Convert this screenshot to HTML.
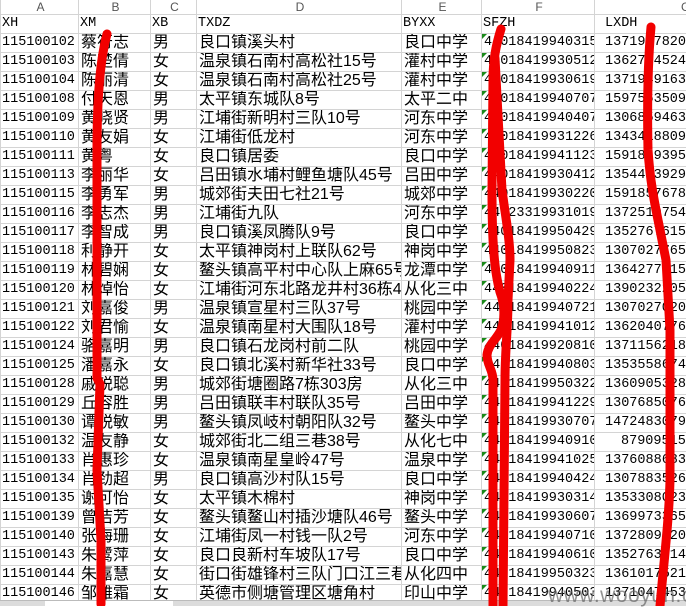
<!DOCTYPE html>
<html><head><meta charset="utf-8"><style>
*{margin:0;padding:0;box-sizing:border-box}
body{width:686px;height:606px;overflow:hidden;background:#fff;position:relative;font-family:"Liberation Mono","Noto Sans CJK SC",monospace;color:#000}
table{position:absolute;left:0;top:0px;border-collapse:collapse;table-layout:fixed;width:760px}
td{height:19px;border:1px solid #d4d4d4;white-space:nowrap;overflow:hidden;font-size:16px;line-height:18px;padding:0 0 0 2px;font-family:"Liberation Sans","Noto Sans CJK SC",sans-serif}
td.n{font-family:"Liberation Mono",monospace;font-size:13.5px;padding-left:1px}
td.f{position:relative;padding-left:2px}
td.f::before{content:"";position:absolute;left:0;top:0;border-top:5px solid #1a8a1a;border-right:5px solid transparent}
tr.h td{color:#555;text-align:center;font-family:"Liberation Sans",sans-serif;font-size:12px;height:14px;line-height:10px;background:#fff;border-top:none}
td.g{padding-left:10px}
.tab{position:absolute;left:0;top:600px;width:686px;height:6px;background:#dcdcdc;border-top:1px solid #bbb}
.tab i{position:absolute;left:45px;top:0;width:128px;height:6px;background:#fff}
.wm{position:absolute;left:548px;top:584px;font-family:"Liberation Sans",sans-serif;font-size:21px;color:#666;opacity:.7;letter-spacing:0.5px}
svg{position:absolute;left:0;top:0}
</style></head><body>
<table>
<colgroup><col style="width:78px"><col style="width:72px"><col style="width:46px"><col style="width:205px"><col style="width:80px"><col style="width:113px"><col style="width:166px"></colgroup>
<tr class="h"><td>A</td><td>B</td><td>C</td><td>D</td><td>E</td><td>F</td><td style="text-align:left;padding-left:86px">G</td></tr>
<tr><td class="n">XH</td><td class="n">XM</td><td class="n">XB</td><td class="n">TXDZ</td><td class="n">BYXX</td><td class="n">SFZH</td><td class="n g">LXDH</td></tr>
<tr><td class="n">115100102</td><td>蔡符志</td><td>男</td><td>良口镇溪头村</td><td>良口中学</td><td class="n f">44018419940315</td><td class="n g">1371917820</td></tr>
<tr><td class="n">115100103</td><td>陈楚倩</td><td>女</td><td>温泉镇石南村高松社15号</td><td>灌村中学</td><td class="n f">44018419930512</td><td class="n g">1362774524</td></tr>
<tr><td class="n">115100104</td><td>陈丽清</td><td>女</td><td>温泉镇石南村高松社25号</td><td>灌村中学</td><td class="n f">44018419930619</td><td class="n g">1371949163</td></tr>
<tr><td class="n">115100108</td><td>付天恩</td><td>男</td><td>太平镇东城队8号</td><td>太平二中</td><td class="n f">44018419940707</td><td class="n g">1597563509</td></tr>
<tr><td class="n">115100109</td><td>黄晓贤</td><td>男</td><td>江埔街新明村三队10号</td><td>河东中学</td><td class="n f">44018419940407</td><td class="n g">1306859463</td></tr>
<tr><td class="n">115100110</td><td>黄友娟</td><td>女</td><td>江埔街低龙村</td><td>河东中学</td><td class="n f">44018419931226</td><td class="n g">1343418809</td></tr>
<tr><td class="n">115100111</td><td>黄粤</td><td>女</td><td>良口镇居委</td><td>良口中学</td><td class="n f">44018419941123</td><td class="n g">1591849395</td></tr>
<tr><td class="n">115100113</td><td>李丽华</td><td>女</td><td>吕田镇水埔村鲤鱼塘队45号</td><td>吕田中学</td><td class="n f">44018419930412</td><td class="n g">1354453929</td></tr>
<tr><td class="n">115100115</td><td>李勇军</td><td>男</td><td>城郊街夫田七社21号</td><td>城郊中学</td><td class="n f">44018419930220</td><td class="n g">1591857678</td></tr>
<tr><td class="n">115100116</td><td>李志杰</td><td>男</td><td>江埔街九队</td><td>河东中学</td><td class="n f">44023319931019</td><td class="n g">1372510754</td></tr>
<tr><td class="n">115100117</td><td>李智成</td><td>男</td><td>良口镇溪凤腾队9号</td><td>良口中学</td><td class="n f">44018419950429</td><td class="n g">1352767615</td></tr>
<tr><td class="n">115100118</td><td>利静开</td><td>女</td><td>太平镇神岗村上联队62号</td><td>神岗中学</td><td class="n f">44018419950823</td><td class="n g">1307027765</td></tr>
<tr><td class="n">115100119</td><td>林碧娴</td><td>女</td><td>鳌头镇高平村中心队上麻65号</td><td>龙潭中学</td><td class="n f">44018419940911</td><td class="n g">1364277515</td></tr>
<tr><td class="n">115100120</td><td>林焯怡</td><td>女</td><td>江埔街河东北路龙井村36栋4</td><td>从化三中</td><td class="n f">44018419940224</td><td class="n g">1390232205</td></tr>
<tr><td class="n">115100121</td><td>刘嘉俊</td><td>男</td><td>温泉镇宣星村三队37号</td><td>桃园中学</td><td class="n f">44018419940721</td><td class="n g">1307027020</td></tr>
<tr><td class="n">115100122</td><td>刘君愉</td><td>女</td><td>温泉镇南星村大围队18号</td><td>灌村中学</td><td class="n f">44018419941012</td><td class="n g">1362040776</td></tr>
<tr><td class="n">115100124</td><td>骆嘉明</td><td>男</td><td>良口镇石龙岗村前二队</td><td>桃园中学</td><td class="n f">44018419920810</td><td class="n g">1371156218</td></tr>
<tr><td class="n">115100125</td><td>潘嘉永</td><td>女</td><td>良口镇北溪村新华社33号</td><td>良口中学</td><td class="n f">44018419940803</td><td class="n g">1353558674</td></tr>
<tr><td class="n">115100128</td><td>戚锐聪</td><td>男</td><td>城郊街塘圈路7栋303房</td><td>从化三中</td><td class="n f">44018419950322</td><td class="n g">1360905328</td></tr>
<tr><td class="n">115100129</td><td>丘容胜</td><td>男</td><td>吕田镇联丰村联队35号</td><td>吕田中学</td><td class="n f">44018419941229</td><td class="n g">1307685076</td></tr>
<tr><td class="n">115100130</td><td>谭锐敏</td><td>男</td><td>鳌头镇凤岐村朝阳队32号</td><td>鳌头中学</td><td class="n f">44018419930707</td><td class="n g">1472483079</td></tr>
<tr><td class="n">115100132</td><td>温友静</td><td>女</td><td>城郊街北二组三巷38号</td><td>从化七中</td><td class="n f">44018419940910</td><td class="n g" style="padding-left:26px">87909515</td></tr>
<tr><td class="n">115100133</td><td>肖惠珍</td><td>女</td><td>温泉镇南星皇岭47号</td><td>温泉中学</td><td class="n f">44018419941025</td><td class="n g">1376088683</td></tr>
<tr><td class="n">115100134</td><td>肖劲超</td><td>男</td><td>良口镇高沙村队15号</td><td>良口中学</td><td class="n f">44018419940424</td><td class="n g">1307883526</td></tr>
<tr><td class="n">115100135</td><td>谢可怡</td><td>女</td><td>太平镇木棉村</td><td>神岗中学</td><td class="n f">44018419930314</td><td class="n g">1353308023</td></tr>
<tr><td class="n">115100139</td><td>曾洁芳</td><td>女</td><td>鳌头镇鳌山村插沙塘队46号</td><td>鳌头中学</td><td class="n f">44018419930607</td><td class="n g">1369973365</td></tr>
<tr><td class="n">115100140</td><td>张海珊</td><td>女</td><td>江埔街凤一村钱一队2号</td><td>河东中学</td><td class="n f">44018419940710</td><td class="n g">1372809320</td></tr>
<tr><td class="n">115100143</td><td>朱鹭萍</td><td>女</td><td>良口良新村车坡队17号</td><td>良口中学</td><td class="n f">44018419940610</td><td class="n g">1352763014</td></tr>
<tr><td class="n">115100144</td><td>朱嘉慧</td><td>女</td><td>街口街雄锋村三队门口江三巷</td><td>从化四中</td><td class="n f">44018419950323</td><td class="n g">1361017521</td></tr>
<tr><td class="n">115100146</td><td>邹雅霜</td><td>女</td><td>英德市侧塘管理区塘角村</td><td>印山中学</td><td class="n f">44018419940503</td><td class="n g">1371047453</td></tr>
</table>
<div class="tab"><i></i></div>
<div class="wm">www.wooyun.org</div>
<svg width="686" height="606" viewBox="0 0 686 606" fill="none" stroke="#f20000" stroke-width="9" stroke-linecap="round" stroke-linejoin="round">
<path d="M107 34 C100 60 97 100 97 150 L97 378 L100 384 L97 470 L101 540 L101 604"/>
<path d="M501 29 C496 45 493 60 493 80 L492 190 C492 240 494 270 500 292 C505 305 505 320 501 330 C496 340 488 345 487 355 C487 365 493 370 493 380 L493 606"/>
<path d="M495 58 C497 100 500 150 502 190 C506 220 510 240 510 260 L508 300 C508 330 505 350 505 380 L503 606"/>
<path d="M651 27 C648 60 647 100 648 150 C650 180 654 200 658 220 L666 260 L670 330 L670 480 C669 520 664 560 660 606"/>
</svg>
</body></html>
